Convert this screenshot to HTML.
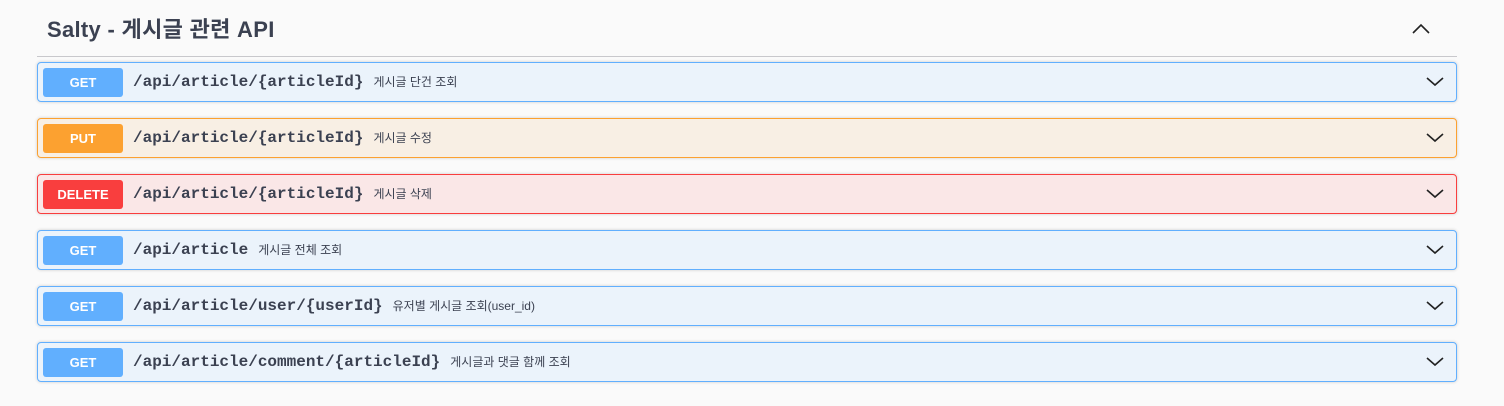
<!DOCTYPE html>
<html><head><meta charset="utf-8"><style>
body{margin:0;background:#fafafa;width:1504px;height:406px;overflow:hidden;font-family:"Liberation Sans","Noto Sans CJK KR",sans-serif;color:#3b4151}
h3{position:absolute;left:47px;top:14px;margin:0;font-size:22px;font-weight:700;font-family:"Liberation Sans","Noto Sans CJK KR",sans-serif;line-height:32px;letter-spacing:0.3px}
.hr{position:absolute;left:37px;top:56px;width:1420px;height:1px;background:#c8c8cc}
.op{position:absolute;left:37px;width:1418px;height:38px;border:1px solid;border-radius:4px;box-shadow:0 0 3px rgba(0,0,0,.19)}
.get{background:#ebf3fb;border-color:#61affe}.get .b{background:#61affe}
.put{background:#f8efe4;border-color:#fca130}.put .b{background:#fca130}
.del{background:#fae7e7;border-color:#f93e3e}.del .b{background:#f93e3e}
.b{position:absolute;left:5px;top:5px;width:80px;height:29px;border-radius:3px;color:#fff;font-weight:700;font-size:13px;text-align:center;line-height:29px;font-family:"Liberation Sans",sans-serif}
.p{position:absolute;left:95px;top:0;line-height:38px;font-family:"Liberation Mono","DejaVu Sans Mono",monospace;font-weight:700;font-size:16px;color:#3b4151;white-space:nowrap}
.p span{font-family:"Liberation Sans","Noto Sans CJK KR",sans-serif;font-weight:400;font-size:12px;margin-left:10px}
svg.c{position:absolute;right:12px;top:11px}
</style></head><body>
<h3>Salty - 게시글 관련 API</h3>
<svg style="position:absolute;left:1411px;top:22px" width="20" height="14" viewBox="0 0 20 14"><path d="M2 11L10 3L18 11" fill="none" stroke="#222" stroke-width="1.6"/></svg>
<div class="hr"></div>
<div class="op get" style="top:62px"><div class="b">GET</div><div class="p">/api/article/{articleId}<span>게시글 단건 조회</span></div><svg class="c" width="18" height="14" viewBox="0 0 18 14"><path d="M1 4L9 11L17 4" fill="none" stroke="#222" stroke-width="1.6"/></svg></div>
<div class="op put" style="top:118px"><div class="b">PUT</div><div class="p">/api/article/{articleId}<span>게시글 수정</span></div><svg class="c" width="18" height="14" viewBox="0 0 18 14"><path d="M1 4L9 11L17 4" fill="none" stroke="#222" stroke-width="1.6"/></svg></div>
<div class="op del" style="top:174px"><div class="b">DELETE</div><div class="p">/api/article/{articleId}<span>게시글 삭제</span></div><svg class="c" width="18" height="14" viewBox="0 0 18 14"><path d="M1 4L9 11L17 4" fill="none" stroke="#222" stroke-width="1.6"/></svg></div>
<div class="op get" style="top:230px"><div class="b">GET</div><div class="p">/api/article<span>게시글 전체 조회</span></div><svg class="c" width="18" height="14" viewBox="0 0 18 14"><path d="M1 4L9 11L17 4" fill="none" stroke="#222" stroke-width="1.6"/></svg></div>
<div class="op get" style="top:286px"><div class="b">GET</div><div class="p">/api/article/user/{userId}<span>유저별 게시글 조회(user_id)</span></div><svg class="c" width="18" height="14" viewBox="0 0 18 14"><path d="M1 4L9 11L17 4" fill="none" stroke="#222" stroke-width="1.6"/></svg></div>
<div class="op get" style="top:342px"><div class="b">GET</div><div class="p">/api/article/comment/{articleId}<span>게시글과 댓글 함께 조회</span></div><svg class="c" width="18" height="14" viewBox="0 0 18 14"><path d="M1 4L9 11L17 4" fill="none" stroke="#222" stroke-width="1.6"/></svg></div>
</body></html>
